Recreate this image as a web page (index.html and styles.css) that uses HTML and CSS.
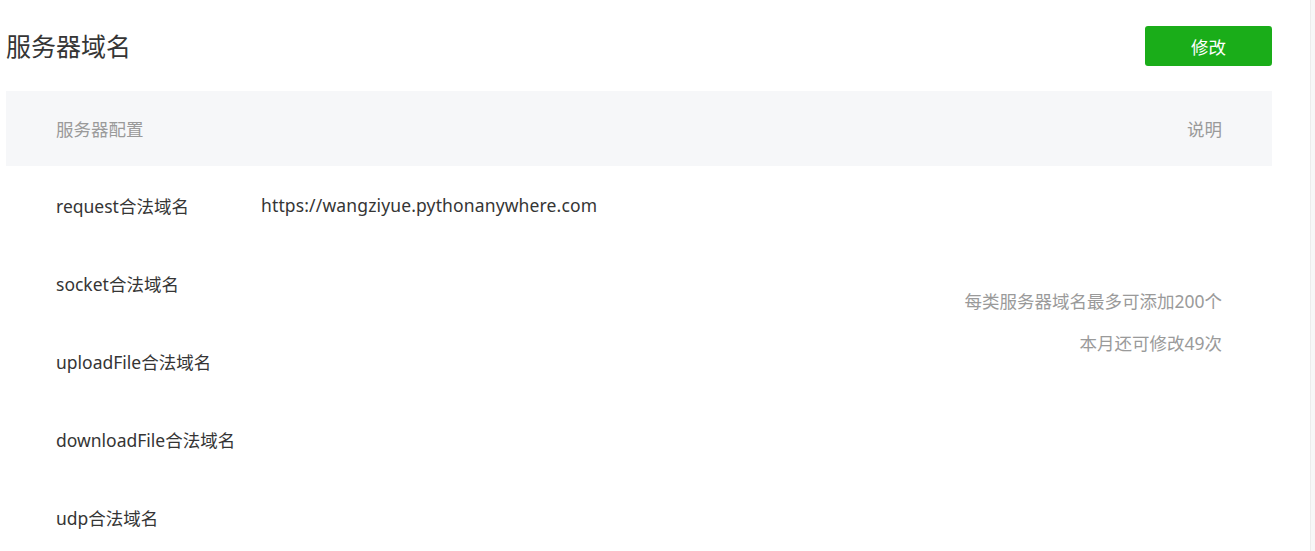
FILE: index.html
```html
<!DOCTYPE html>
<html lang="zh-CN">
<head>
<meta charset="utf-8">
<title>服务器域名</title>
<link rel="stylesheet" href="styles.css">
</head>
<body>
<div class="page">
  <main class="main">
    <div class="title-bar">
      <h2 class="title">服务器域名</h2>
      <button class="btn-primary" type="button">修改</button>
    </div>
    <div class="table">
      <div class="thead">
        <span class="th">服务器配置</span>
        <span class="th th-right">说明</span>
      </div>
      <div class="tbody">
        <div class="rows">
          <div class="row"><span class="label">request合法域名</span><span class="value">https://wangziyue.pythonanywhere.com</span></div>
          <div class="row"><span class="label">socket合法域名</span><span class="value"></span></div>
          <div class="row"><span class="label">uploadFile合法域名</span><span class="value"></span></div>
          <div class="row"><span class="label">downloadFile合法域名</span><span class="value"></span></div>
          <div class="row"><span class="label">udp合法域名</span><span class="value"></span></div>
        </div>
        <div class="notes">
          <p class="note">每类服务器域名最多可添加200个</p>
          <p class="note">本月还可修改49次</p>
        </div>
      </div>
    </div>
  </main>
  <div class="scroll-strip"></div>
</div>
</body>
</html>
```
FILE: styles.css
```css
* { box-sizing: border-box; }
html, body {
  margin: 0;
  padding: 0;
  background: #fff;
  height: 100%;
  overflow: hidden;
}
body {
  font-family: "Noto Sans", "Noto Sans CJK SC", sans-serif;
  font-size: 17.5px;
  color: #353535;
}
.page {
  display: flex;
  height: 100%;
}
.main {
  flex: 1;
  padding: 26px 38px 0 6px;
}
.scroll-strip {
  width: 5px;
  background: #f7f7f7;
  border-left: 1px solid #ececec;
}
.title-bar {
  display: flex;
  justify-content: space-between;
  align-items: center;
  height: 40px;
}
.title {
  margin: 0;
  font-size: 25px;
  font-weight: 400;
  color: #353535;
  line-height: 40px;
}
.btn-primary {
  width: 127px;
  height: 40px;
  border: 0;
  border-radius: 3px;
  background: #1aad19;
  color: #fff;
  font-family: inherit;
  font-size: 17.5px;
  padding: 0;
}
.table {
  margin-top: 25px;
}
.thead {
  display: flex;
  justify-content: space-between;
  align-items: center;
  height: 75px;
  background: #f6f7f9;
  padding: 0 50px;
  color: #9a9a9a;
}
.tbody {
  display: flex;
  justify-content: space-between;
  padding: 0 50px;
}
.row {
  display: flex;
  align-items: center;
  height: 78px;
}
.label {
  width: 205px;
}
.value {
  letter-spacing: 0.14px;
}
.notes {
  padding-top: 114px;
  text-align: right;
  color: #9a9a9a;
}
.note {
  margin: 0;
  line-height: 42px;
}
```
